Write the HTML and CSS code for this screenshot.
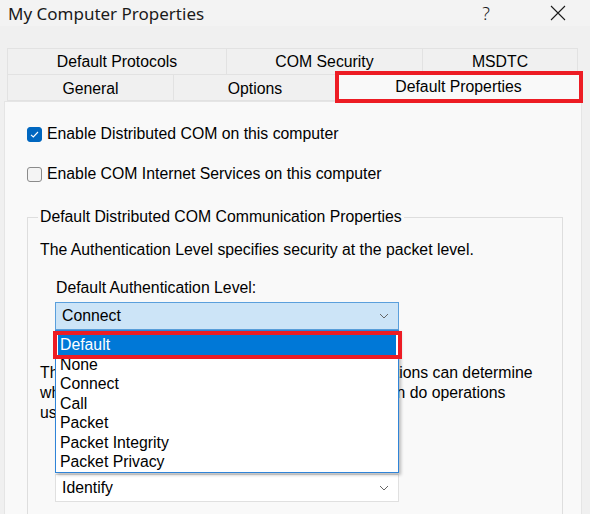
FILE: index.html
```html
<!DOCTYPE html>
<html lang="en">
<head>
    <meta charset="UTF-8">
    <title>My Computer Properties</title>
    <link rel="stylesheet" href="styles.css">
</head>
<body>
    <div class="window">
        <div class="titlebar">
            <span class="title">My Computer Properties</span>
            <span class="help">?</span>
            <svg class="close" width="16" height="16" viewBox="0 0 16 16">
                <path d="M1 1 L15 15 M15 1 L1 15" stroke="#1a1a1a" stroke-width="1.1" fill="none"/>
            </svg>
        </div>

        <div class="tabs">
            <div class="tab-row">
                <div class="tab tab-protocols">Default Protocols</div>
                <div class="tab tab-security">COM Security</div>
                <div class="tab tab-msdtc">MSDTC</div>
            </div>
            <div class="tab-row">
                <div class="tab tab-general">General</div>
                <div class="tab tab-options">Options</div>
                <div class="tab tab-props selected">
                    Default Properties
                    <span class="mark mark-tab"></span>
                </div>
            </div>
        </div>

        <div class="panel">
            <div class="check">
                <span class="box on">
                    <svg width="11" height="11" viewBox="0 0 11 11">
                        <path d="M2 5.8 L4.3 8 L9 3" stroke="#fff" stroke-width="1.1" fill="none"/>
                    </svg>
                </span>
                Enable Distributed COM on this computer
            </div>
            <div class="check">
                <span class="box"></span>
                Enable COM Internet Services on this computer
            </div>

            <fieldset class="group">
                <legend>Default Distributed COM Communication Properties</legend>
                <p class="note first">The Authentication Level specifies security at the packet level.</p>
                <p class="field-label">Default Authentication Level:</p>

                <div class="combo-wrap">
                    <div class="combo open">
                        <span>Connect</span>
                        <svg class="chev" width="10" height="6" viewBox="0 0 10 6">
                            <path d="M1 1 L5 5 L9 1" stroke="#666" stroke-width="1" fill="none"/>
                        </svg>
                    </div>
                    <ul class="dropdown">
                        <li class="picked">Default</li>
                        <li>None</li>
                        <li>Connect</li>
                        <li>Call</li>
                        <li>Packet</li>
                        <li>Packet Integrity</li>
                        <li>Packet Privacy</li>
                    </ul>
                    <span class="mark mark-item"></span>
                </div>

                <p class="note second">The Impersonation Level specifies whether applications can determine who is calling them, and whether the application can do operations using the client's identity.</p>
                <p class="field-label imp">Default Impersonation Level:</p>
                <div class="combo">
                    <span>Identify</span>
                    <svg class="chev" width="10" height="6" viewBox="0 0 10 6">
                        <path d="M1 1 L5 5 L9 1" stroke="#666" stroke-width="1" fill="none"/>
                    </svg>
                </div>
            </fieldset>
        </div>
    </div>
</body>
</html>
```

FILE: styles.css
```css
*{
    margin: 0;
    padding: 0;
    box-sizing: border-box;
}

body{
    width: 590px;
    height: 514px;
    overflow: hidden;
    background-color: #f0f0f0;
    font-family: 'Liberation Sans', Arial, sans-serif;
    font-size: 15.8px;
    color: #000;
}

.window{
    width: 590px;
    height: 514px;
    overflow: hidden;
}

/* title bar */
.titlebar{
    display: flex;
    align-items: center;
    height: 26px;
    padding-left: 8px;
    background-color: #f3f3f3;
}

.title{
    font-family: 'Noto Sans', 'Open Sans', sans-serif;
    font-size: 17px;
    color: #1a1a1a;
    flex-grow: 1;
}

.help{
    font-family: 'Noto Sans', sans-serif;
    font-size: 18px;
    font-weight: 300;
    color: #1a1a1a;
    margin-right: 60px;
}

.close{
    margin-right: 24px;
}

/* tabs */
.tabs{
    padding-top: 22px;
}

.tab-row{
    display: flex;
    padding-left: 7px;
}

.tab{
    display: flex;
    justify-content: center;
    align-items: center;
    height: 27px;
    border: 1px solid #e2e2e2;
    border-left: none;
    background-color: #f0f0f0;
    color: #000;
}

.tab-protocols{ width: 220px; border-left: 1px solid #e2e2e2; }
.tab-security{ width: 196px; }
.tab-msdtc{ width: 155px; }

.tab-row + .tab-row .tab{
    border-top: none;
    height: 26px;
    padding-top: 3px;
}

.tab-general{ width: 167px; border-left: 1px solid #e2e2e2 !important; }
.tab-options{ width: 163px; }

.tab-props{
    width: 244px;
    position: relative;
}

.tab-row + .tab-row .tab.selected{
    background-color: #f9f9f9;
    margin-top: -3px;
    height: 30px;
    margin-bottom: -1px;
    padding-top: 1px;
    z-index: 1;
}

/* red annotation boxes */
.mark{
    position: absolute;
    border: 4px solid #ed1c24;
    pointer-events: none;
}

.mark-tab{
    left: -2px;
    top: -1px;
    width: 248px;
    height: 32px;
}

/* panel */
.panel{
    width: 578px;
    height: 420px;
    margin-left: 4px;
    background-color: #f9f9f9;
    border: 1px solid #e5e5e5;
    padding: 22px 0 0 22px;
    position: relative;
}

.check{
    display: flex;
    align-items: center;
    height: 20px;
    margin-bottom: 20px;
    line-height: 20px;
}

.box{
    display: flex;
    justify-content: center;
    align-items: center;
    width: 15px;
    height: 15px;
    border: 1px solid #8b8b8b;
    border-radius: 3px;
    background-color: #f4f4f4;
    margin-right: 5px;
}

.box.on{
    background-color: #0067c0;
    border-color: #0067c0;
}

/* group box */
.group{
    width: 536px;
    border: 1px solid #dedede;
    border-bottom: none;
    padding: 0 12px 20px 12px;
    margin-top: 24px;
    height: 320px;
}

.group legend{
    padding: 0 2px;
    margin-left: -2px;
    line-height: 18px;
}

.note{
    line-height: 20px;
}

.note.first{
    margin-top: 14px;
}

.note.second{
    margin-top: 33px;
    width: 500px;
}

.field-label{
    padding-left: 16px;
    line-height: 20px;
    margin-top: 18px;
}

.field-label.imp{
    margin-top: 27px;
}

.combo-wrap{
    position: relative;
    margin-left: 15px;
    width: 344px;
    margin-top: 4px;
}

.combo{
    display: flex;
    align-items: center;
    justify-content: space-between;
    width: 344px;
    height: 28px;
    padding: 0 9px 0 6px;
    border: 1px solid #e0e0e0;
    background-color: #fff;
    margin-left: 15px;
    margin-top: 4px;
}

.combo-wrap .combo{
    margin: 0;
}

.combo.open{
    background-color: #cce4f7;
    border-color: #5a9fdc;
}

/* open list */
.dropdown{
    list-style: none;
    position: absolute;
    top: 28px;
    left: 0;
    width: 344px;
    height: 143px;
    padding-top: 4px;
    background-color: #fff;
    border: 1px solid #2f84d8;
    box-shadow: 2px 2px 3px rgba(0, 0, 0, 0.25);
    z-index: 2;
}

.dropdown li{
    height: 19.5px;
    line-height: 19.5px;
    padding-left: 2px;
    margin: 0 2px;
}

.dropdown li.picked{
    background-color: #0078d7;
    color: #fff;
}

.mark-item{
    left: -2px;
    top: 29px;
    width: 349px;
    height: 28px;
    z-index: 3;
}
```
